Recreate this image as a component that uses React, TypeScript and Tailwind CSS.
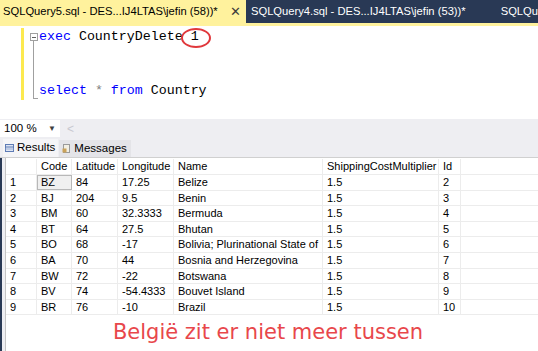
import React from 'react';

const rows = [
  ['1', 'BZ', '84', '17.25', 'Belize', '1.5', '2'],
  ['2', 'BJ', '204', '9.5', 'Benin', '1.5', '3'],
  ['3', 'BM', '60', '32.3333', 'Bermuda', '1.5', '4'],
  ['4', 'BT', '64', '27.5', 'Bhutan', '1.5', '5'],
  ['5', 'BO', '68', '-17', 'Bolivia; Plurinational State of', '1.5', '6'],
  ['6', 'BA', '70', '44', 'Bosnia and Herzegovina', '1.5', '7'],
  ['7', 'BW', '72', '-22', 'Botswana', '1.5', '8'],
  ['8', 'BV', '74', '-54.4333', 'Bouvet Island', '1.5', '9'],
  ['9', 'BR', '76', '-10', 'Brazil', '1.5', '10'],
];

const headers = ['', 'Code', 'Latitude', 'Longitude', 'Name', 'ShippingCostMultiplier', 'Id'];
const widths = ['w-[31px]', 'w-[35px]', 'w-[46px]', 'w-[56px]', 'w-[149px]', 'w-[116px]', 'w-[22px]'];

export default function App() {
  return (
    <div className="w-[538px] h-[351px] overflow-hidden bg-white flex flex-col font-['Liberation_Sans',Arial,sans-serif]">
      {/* Document tabs */}
      <div className="h-[23px] bg-[#293955] flex items-stretch text-[11.2px] shrink-0">
        <div className="w-[247px] bg-[#fff29d] flex items-center pl-[3px] text-black">
          <span className="whitespace-nowrap">SQLQuery5.sql - DES...IJ4LTAS\jefin (58))*</span>
          <span className="ml-auto mr-[5px] text-[13px] text-[#3c3c3c]">✕</span>
        </div>
        <div className="flex items-center pl-[5px] text-white whitespace-nowrap">SQLQuery4.sql - DES...IJ4LTAS\jefin (53))*</div>
        <div className="flex items-center pl-[35px] text-white whitespace-nowrap">SQLQu</div>
      </div>
      <div className="h-[3px] bg-[#fff29d] shrink-0" />

      {/* Editor */}
      <div className="h-[93px] flex shrink-0 pt-[2px]">
        <div className="w-[21px]" />
        <div className="w-[3px] h-[72px] bg-[#fce94f]" />
        <div className="w-[15px] relative">
          <div className="absolute left-[6px] top-[5px] w-[8px] h-[8px] border border-[#a0a0a0] bg-white flex items-center justify-center">
            <div className="w-[4px] h-[1px] bg-[#606060]" />
          </div>
          <div className="absolute left-[9px] top-[13px] w-[1px] h-[58px] bg-[#a0a0a0]" />
          <div className="absolute left-[9px] top-[70px] w-[5px] h-[1px] bg-[#a0a0a0]" />
        </div>
        <div className="font-['Liberation_Mono',monospace] text-[13.3px] leading-[18px] whitespace-pre">
          <div>
            <span className="text-[#0000ff]">exec</span> CountryDelete{' '}
            <span className="relative">
              1
              <span className="absolute left-[-10px] top-[-1px] w-[30px] h-[20px] rounded-[50%] border-2 border-[#e0383c]" />
            </span>
          </div>
          <div>&nbsp;</div>
          <div>&nbsp;</div>
          <div>
            <span className="text-[#0000ff]">select</span> <span className="text-[#808080]">*</span>{' '}
            <span className="text-[#0000ff]">from</span> Country
          </div>
        </div>
      </div>

      {/* Zoom bar */}
      <div className="h-[19px] bg-[#eeeef2] flex items-center shrink-0 text-[11.5px]">
        <div className="w-[60px] h-[17px] bg-white flex items-center pl-[4px] text-black">
          100 %
          <span className="ml-auto mr-[4px] text-[8px] text-[#404040]">▼</span>
        </div>
        <span className="ml-[7px] text-[#c8c8d0] text-[12px]">&lt;</span>
      </div>

      {/* Results tabs */}
      <div className="h-[19px] bg-[#eeeef2] flex items-end shrink-0 pl-[3px] text-[11.5px]">
        <div className="h-[18px] bg-[#f5f5f7] flex items-center pl-[2px] pr-[3px] gap-[3px]">
          <svg width="9" height="8" viewBox="0 0 9 8">
            <rect x="0.5" y="0.5" width="8" height="7" fill="#dfe6f3" stroke="#5d7bb5" />
            <line x1="0.5" y1="3" x2="8.5" y2="3" stroke="#5d7bb5" />
            <line x1="0.5" y1="5" x2="8.5" y2="5" stroke="#9fb1d6" />
          </svg>
          <span>Results</span>
        </div>
        <div className="h-[17px] bg-[#e4e4e8] flex items-center pl-[3px] pr-[4px] gap-[3px] ml-[1px]">
          <svg width="9" height="9" viewBox="0 0 9 9">
            <rect x="1.5" y="0.5" width="6" height="8" fill="#f2efe3" stroke="#9a9a9a" />
            <rect x="0.5" y="4.5" width="4" height="4" fill="#c9a25a" />
          </svg>
          <span>Messages</span>
        </div>
      </div>

      {/* Grid area */}
      <div className="flex-1 flex min-h-0 border-t border-[#d0d0d0]">
        <div className="w-[2px] bg-[#293955]" />
        <div className="w-[3px] bg-[#eeeef2]" />
        <div className="flex-1 flex flex-col border-l border-[#c4c4c4] bg-white pt-[1px]">
          <div className="text-[11px] text-black">
            <div className="flex h-[16px] border-b border-[#ececec]">
              {headers.map((h, i) => (
                <div key={i} className={`${widths[i]} border-r border-[#ececec] flex items-center pl-[4px] whitespace-nowrap`}>
                  {h}
                </div>
              ))}
            </div>
            {rows.map((r, ri) => (
              <div key={ri} className="flex h-[15.6px] border-b border-[#ececec]">
                {r.map((c, ci) => (
                  <div
                    key={ci}
                    className={`${widths[ci]} border-r border-[#ececec] flex items-center pl-[4px] whitespace-nowrap overflow-hidden ${
                      ri === 0 && ci === 1 ? 'bg-[#f0f0f0] outline outline-1 outline-[#b8b8b8] -outline-offset-1' : ''
                    }`}
                  >
                    {c}
                  </div>
                ))}
              </div>
            ))}
          </div>
          <div className="flex-1 flex items-center justify-center pr-[8px]">
            <span className="font-['DejaVu_Sans',sans-serif] text-[21px] text-[#e8474b]">België zit er niet meer tussen</span>
          </div>
        </div>
      </div>
    </div>
  );
}
